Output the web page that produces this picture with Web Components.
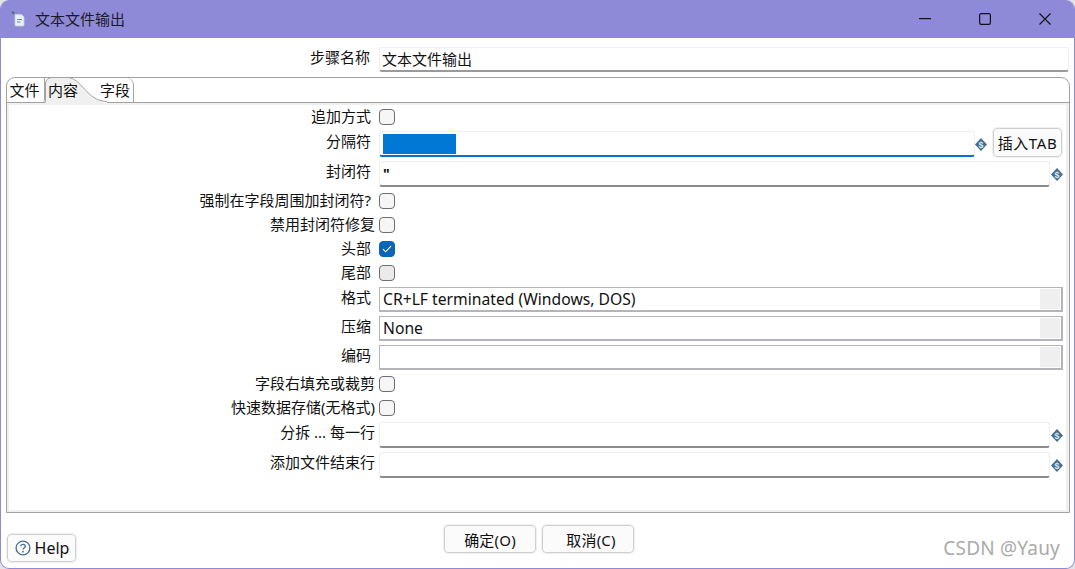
<!DOCTYPE html>
<html lang="zh">
<head>
<meta charset="utf-8">
<title>文本文件输出</title>
<style>
  html, body { margin: 0; height: 100%; overflow: hidden; background: #e4e4e6; }
  body { font: 15px "Noto Sans", "Noto Sans CJK SC", sans-serif; color: #111; }
  .tab-btn { width: 69px; height: 29px; margin: -3px 1px 0 6px; letter-spacing: .6px; }
</style>
</head>
<body>
<dialog-window caption="文本文件输出">
  <form-row label="步骤名称" height="39" top="4" col="373" pad="9">
    <text-field value="文本文件输出" flush></text-field>
  </form-row>

  <tab-panel>
    <form-row label="追加方式" height="24" tight><check-box></check-box></form-row>
    <form-row label="分隔符" height="30">
      <text-field focused selection></text-field>
      <var-icon></var-icon>
      <push-button slot="extra" class="tab-btn">插入TAB</push-button>
    </form-row>
    <form-row label="封闭符" height="30"><text-field value="&quot;" narrow></text-field><var-icon></var-icon></form-row>
    <form-row label="强制在字段周围加封闭符?" height="24" tight><check-box></check-box></form-row>
    <form-row label="禁用封闭符修复" height="24" tight wide><check-box></check-box></form-row>
    <form-row label="头部" height="24" tight><check-box checked></check-box></form-row>
    <form-row label="尾部" height="24" tight><check-box hover></check-box></form-row>
    <form-row label="格式" height="29"><combo-box value="CR+LF terminated (Windows, DOS)"></combo-box></form-row>
    <form-row label="压缩" height="29"><combo-box value="None"></combo-box></form-row>
    <form-row label="编码" height="29"><combo-box></combo-box></form-row>
    <form-row label="字段右填充或裁剪" height="24" tight wide><check-box></check-box></form-row>
    <form-row label="快速数据存储(无格式)" height="24" tight wide><check-box></check-box></form-row>
    <form-row label="分拆 ... 每一行" height="30" wide><text-field narrow></text-field><var-icon></var-icon></form-row>
    <form-row label="添加文件结束行" height="30" wide><text-field narrow></text-field><var-icon></var-icon></form-row>
  </tab-panel>

  <dialog-footer></dialog-footer>
</dialog-window>

<script>
  class DialogWindow extends HTMLElement {
    constructor() {
      super();
      this.attachShadow({ mode: 'open' });
    }

    connectedCallback() {
      this.shadowRoot.innerHTML = `
      <style>
        :host {
          display: flex;
          flex-direction: column;
          box-sizing: border-box;
          width: 1075px;
          height: 569px;
          background: #fff;
          border: solid #8f8ad8;
          border-width: 0 1px 1px 1px;
          border-radius: 9px;
          overflow: hidden;
        }
        .bar {
          flex: none;
          height: 38px;
          display: flex;
          align-items: center;
          background: #8f8ad8;
          padding-left: 11px;
          margin: 0 -1px;
          color: #1a1a2a;
        }
        .caption { margin-left: 9px; line-height: 20px; }
        .spacer { flex: 1; }
        .ctl { width: 60px; height: 38px; display: flex; align-items: center; justify-content: center; }
        .body { flex: 1; display: flex; flex-direction: column; padding: 0 5px 0 5px; min-height: 0; }
      </style>
      <div class="bar">
        <svg width="15" height="16" viewBox="0 0 15 16">
          <path d="M4 3.500h6.500l2.500 2.500v8a1 1 0 0 1-1 1H5a1 1 0 0 1-1-1z" fill="#e9eff6" stroke="#c3d0e0" stroke-width=".8"/>
          <path d="M6 8.500h5M6 11h3.500" stroke="#6f8ba6" stroke-width="1.100"/>
          <path d="M0 .5l3.600.4-1 3z" fill="#3f6a86"/>
        </svg>
        <span class="caption">${this.getAttribute('caption')}</span>
        <span class="spacer"></span>
        <span class="ctl"><svg width="12" height="2"><rect width="12" height="1.2" fill="#111"/></svg></span>
        <span class="ctl"><svg width="12" height="12"><rect x=".6" y=".6" width="10.800" height="10.800" rx="1.600" fill="none" stroke="#111" stroke-width="1.200"/></svg></span>
        <span class="ctl"><svg width="12" height="12"><path d="M.5.5l11 11M11.500.5l-11 11" fill="none" stroke="#111" stroke-width="1.100"/></svg></span>
      </div>
      <div class="body"><slot></slot></div>`;
    }
  }

  // Fila del formulario: etiqueta a la derecha + campo(s)
  class FormRow extends HTMLElement {
    constructor() {
      super();
      this.attachShadow({ mode: 'open' });
    }

    connectedCallback() {
      const h = this.getAttribute('height');
      const top = this.getAttribute('top');
      const col = this.getAttribute('col') || 370;
      const tight = this.hasAttribute('tight');
      const pad = this.getAttribute('pad') || (this.hasAttribute('wide') ? 4 : 8);
      this.shadowRoot.innerHTML = `
      <style>
        :host {
          display: grid;
          grid-template-columns: ${col}px 1fr auto;
          box-sizing: border-box;
          height: ${h}px;
          align-items: center;
          padding-right: ${top ? 0 : 3}px;
          ${top ? `padding-top:${top}px;` : ''}
        }
        .label {
          text-align: right;
          white-space: nowrap;
          padding-right: ${pad}px;
          line-height: 20px;
          position: relative;
          top: ${tight ? -1 : -3}px;
        }
        .field { display: flex; align-items: center; min-width: 0; }
        .extra { display: flex; }
      </style>
      <div class="label">${this.getAttribute('label')}</div>
      <div class="field"><slot></slot></div>
      <div class="extra"><slot name="extra"></slot></div>`;
    }
  }

  class TextField extends HTMLElement {
    constructor() {
      super();
      this.attachShadow({ mode: 'open' });
    }

    connectedCallback() {
      const focused = this.hasAttribute('focused');
      const narrow = this.hasAttribute('narrow');
      const flush = this.hasAttribute('flush');
      this.shadowRoot.innerHTML = `
      <style>
        :host {
          display: flex;
          align-items: center;
          box-sizing: border-box;
          flex: 1;
          min-width: 0;
          height: 26px;
          background: #fff;
          border: 1px solid #efefef;
          border-bottom: 2px solid ${focused ? '#0672cb' : '#8b8b8b'};
          border-radius: 3px;
          padding-left: ${flush ? 2 : 3}px;
          ${focused ? 'margin-right:-1px;' : ''}
          ${flush ? 'height:25px;border-bottom-color:#9a9a9a;' : ''}
        }
        .sel { width: 73px; height: 20px; background: #0078d4; }
        .txt { line-height: 20px; white-space: pre; ${narrow ? 'font-size:14px;font-weight:700;' : ''} }
      </style>
      ${this.hasAttribute('selection') ? '<span class="sel"></span>' : `<span class="txt">${this.getAttribute('value') || ''}</span>`}`;
    }
  }

  class CheckBox extends HTMLElement {
    constructor() {
      super();
      this.attachShadow({ mode: 'open' });
    }

    connectedCallback() {
      const checked = this.hasAttribute('checked');
      this.shadowRoot.innerHTML = `
      <style>
        :host {
          display: flex;
          align-items: center;
          justify-content: center;
          box-sizing: border-box;
          width: 16px;
          height: 16px;
          border-radius: 4px;
          background: ${checked ? '#0a64b8' : this.hasAttribute('hover') ? '#ebebeb' : '#f6f6f6'};
          border: 1px solid ${checked ? '#0a64b8' : '#6e6e6e'};
        }
      </style>
      ${checked ? '<svg width="10" height="8" viewBox="0 0 10 8"><path d="M1 4.200l2.600 2.600L9 1.200" fill="none" stroke="#fff" stroke-width="1.100"/></svg>' : ''}`;
    }
  }

  class ComboBox extends HTMLElement {
    constructor() {
      super();
      this.attachShadow({ mode: 'open' });
    }

    connectedCallback() {
      this.shadowRoot.innerHTML = `
      <style>
        :host {
          display: flex;
          align-items: center;
          box-sizing: border-box;
          flex: 1;
          height: 25px;
          background: #fff;
          border: 1px solid #b4b4bb;
          border-bottom-width: 2px;
          border-right-width: 2px;
          padding: 1px 1px 1px 3px;
        }
        .txt { flex: 1; font-size: 15.700px; line-height: 20px; white-space: pre; }
        .arrow { width: 20px; align-self: stretch; background: #efefef; }
      </style>
      <span class="txt">${this.getAttribute('value') || ''}</span>
      <span class="arrow"></span>`;
    }
  }

  class VarIcon extends HTMLElement {
    constructor() {
      super();
      this.attachShadow({ mode: 'open' });
    }

    connectedCallback() {
      this.shadowRoot.innerHTML = `
      <style>
        :host { display: block; flex: none; width: 12px; height: 13px; margin-left: 1px; }
        svg { display: block; }
        text { font: bold 9.500px "Liberation Sans", sans-serif; fill: #dce8f0; }
      </style>
      <svg width="12" height="13" viewBox="0 0 13 13" preserveAspectRatio="none">
        <path d="M6.500 0l6.500 6.500-6.500 6.500L0 6.500z" fill="#47708f"/>
        <text x="6.500" y="9.900" text-anchor="middle">$</text>
      </svg>`;
    }
  }

  class PushButton extends HTMLElement {
    constructor() {
      super();
      this.attachShadow({ mode: 'open' });
    }

    connectedCallback() {
      this.shadowRoot.innerHTML = `
      <style>
        :host {
          display: inline-flex;
          align-items: center;
          justify-content: center;
          box-sizing: border-box;
          background: #fbfbfb;
          border: 1px solid #cfcfcf;
          border-radius: 4px;
          line-height: 20px;
          white-space: nowrap;
          outline: 1px solid #f0f0f0;
        }
      </style>
      <slot></slot>`;
    }
  }

  class TabPanel extends HTMLElement {
    constructor() {
      super();
      this.attachShadow({ mode: 'open' });
    }

    connectedCallback() {
      this.shadowRoot.innerHTML = `
      <style>
        :host {
          display: flex;
          flex-direction: column;
          box-sizing: border-box;
          width: 1064px;
          height: 436px;
          border: 1px solid #a2a2a2;
          border-radius: 9px 9px 0 0;
          overflow: hidden;
        }
        .strip {
          position: relative;
          flex: none;
          height: 24px;
          display: flex;
          border-bottom: 1px solid #a2a2a2;
        }
        .tab { line-height: 24px; text-align: center; position: relative; box-sizing: border-box; }
        .t1 { width: 38px; padding-right: 2px; border-right: 1px solid #a2a2a2; border-bottom-right-radius: 3px; }
        .t2 { width: 55px; text-align: left; padding-left: 3px; }
        .t3 { width: 34px; padding-right: 3px; border-right: 1px solid #a2a2a2; border-radius: 0 7px 0 0; }
        .curve { position: absolute; left: 38px; top: -1px; }
        .content {
          flex: 1;
          border: solid #f0f0f0;
          border-width: 2px 3px 2px 2px;
          min-height: 0;
        }
      </style>
      <div class="strip">
        <svg class="curve" width="64" height="26" viewBox="0 0 64 26">
          <path d="M0.500 26V7Q0.500 1 7 .5H22C37 .5 41 24 62 24.500V26z" fill="#f0f0f0"/>
          <path d="M0.500 25V7Q0.500 1 7 .5H22C37 .5 41 24 62 24.500" fill="none" stroke="#a2a2a2"/>
        </svg>
        <div class="tab t1">文件</div>
        <div class="tab t2">内容</div>
        <div class="tab t3">字段</div>
      </div>
      <div class="content"><slot></slot></div>`;
    }
  }

  class DialogFooter extends HTMLElement {
    constructor() {
      super();
      this.attachShadow({ mode: 'open' });
    }

    connectedCallback() {
      this.shadowRoot.innerHTML = `
      <style>
        :host {
          display: grid;
          grid-template-columns: 1fr auto 1fr;
          flex: 1;
          padding-left: 3px;
        }
        .left { display: flex; align-items: flex-end; padding-bottom: 6px; margin-left: -2px; }
        .mid { display: flex; gap: 6px; padding-top: 12px; align-items: flex-start; }
        .right { display: flex; justify-content: flex-end; align-items: flex-end; padding: 0 9px 7px 0; }
        .ok { width: 92px; height: 28px; padding-top: 1px; box-sizing: border-box; letter-spacing: .2px; }
        .shift { padding-left: 6px; }
        .help { width: 69px; height: 28px; gap: 4px; font-size: 16px; padding-left: 1px; }
        .mark { font: 19px "Noto Sans", sans-serif; color: #aaa; letter-spacing: .2px; line-height: 26px; }
        svg { display: block; }
      </style>
      <div class="left">
        <push-button class="help">
          <svg width="16" height="16" viewBox="0 0 16 16"><circle cx="8" cy="8" r="6.900" fill="none" stroke="#47708f" stroke-width="1.400"/><path d="M5.800 6.200C5.800 3.600 10.300 3.700 10.300 6.200c0 1.800-2.300 1.700-2.300 3.400" fill="none" stroke="#47708f" stroke-width="1.300"/><circle cx="8" cy="11.700" r=".9" fill="#47708f"/></svg>
          Help
        </push-button>
      </div>
      <div class="mid">
        <push-button class="ok">确定(O)</push-button>
        <push-button class="ok shift">取消(C)</push-button>
      </div>
      <div class="right"><span class="mark">CSDN @Yauy</span></div>`;
    }
  }

  customElements.define('dialog-window', DialogWindow);
  customElements.define('form-row', FormRow);
  customElements.define('text-field', TextField);
  customElements.define('check-box', CheckBox);
  customElements.define('combo-box', ComboBox);
  customElements.define('var-icon', VarIcon);
  customElements.define('push-button', PushButton);
  customElements.define('tab-panel', TabPanel);
  customElements.define('dialog-footer', DialogFooter);
</script>
</body>
</html>
